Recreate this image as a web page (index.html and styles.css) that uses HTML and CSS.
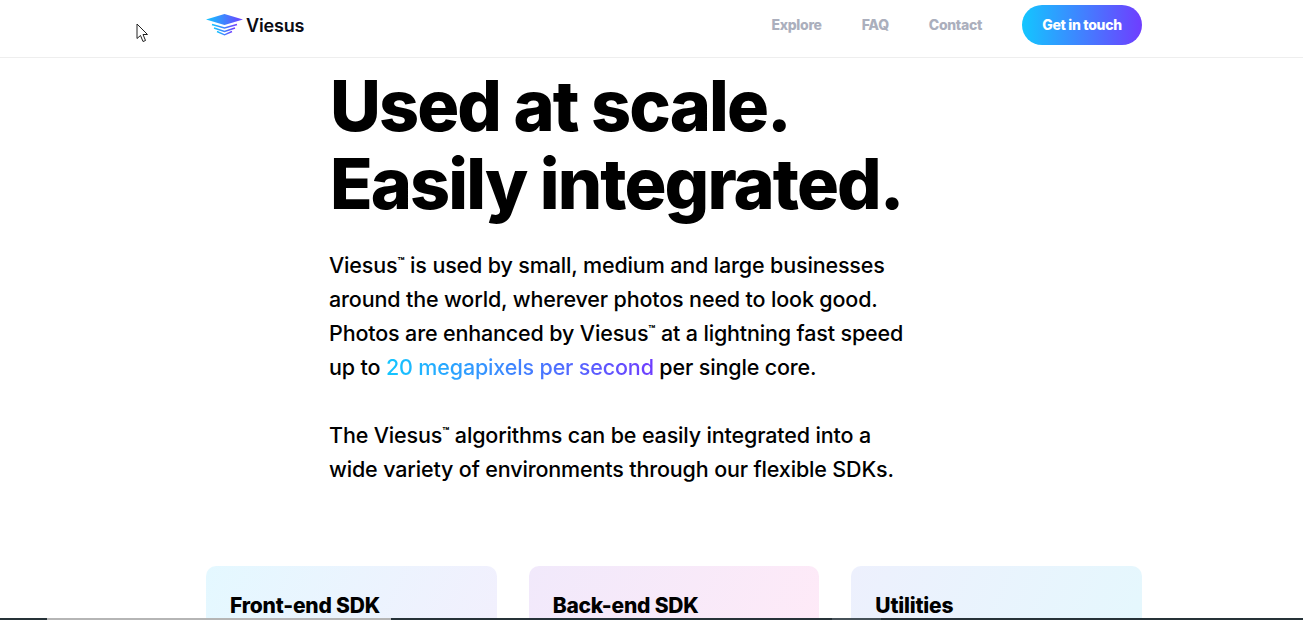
FILE: index.html
```html
<!DOCTYPE html>
<html lang="en">
<head>
  <meta charset="UTF-8" />
  <title>Viesus</title>
  <link rel="stylesheet" href="styles.css">
</head>
<body>

  <header class="topbar">
    <div class="topbar-inner">
      <a class="logo" href="#">
        <svg class="logo-mark" width="37" height="22" viewBox="0 0 37 22">
          <defs>
            <linearGradient id="logoGrad" x1="0" y1="0" x2="1" y2="0">
              <stop offset="0" stop-color="#13c6ff" />
              <stop offset="1" stop-color="#6f3dff" />
            </linearGradient>
          </defs>
          <path d="M18.500 0 L37 5.500 L18.500 11 L0 5.500 Z" fill="url(#logoGrad)" />
          <path d="M6 10.500 L18.500 14 L31 10.500" fill="none" stroke="url(#logoGrad)" stroke-width="1.400" />
          <path d="M8 14 L18.500 17.500 L29 14" fill="none" stroke="url(#logoGrad)" stroke-width="1.400" />
          <path d="M11 17.500 L18.500 20.800 L26 17.500" fill="none" stroke="url(#logoGrad)" stroke-width="1.400" />
        </svg>
        <span>Viesus</span>
      </a>
      <nav class="nav">
        <a href="#">Explore</a>
        <a href="#">FAQ</a>
        <a href="#">Contact</a>
        <a class="btn" href="#">Get in touch</a>
      </nav>
    </div>
  </header>

  <svg class="cursor" width="14" height="20" viewBox="0 0 14 20">
    <path d="M1 1 L1 15.500 L4.500 12.500 L7 18.500 L9.500 17.500 L7 11.500 L11.500 11.500 Z" fill="#fff" stroke="#222" stroke-width="1" />
  </svg>

  <main class="content">
    <section class="intro">
      <h1>Used at scale.<br>Easily integrated.</h1>
      <p>Viesus<sup>™</sup> is used by small, medium and large businesses<br>
        around the world, wherever photos need to look good.<br>
        Photos are enhanced by Viesus<sup>™</sup> at a lightning fast speed<br>
        up to <span class="grad-text">20 megapixels per second</span> per single core.</p>
      <p>The Viesus<sup>™</sup> algorithms can be easily integrated into a<br>
        wide variety of environments through our flexible SDKs.</p>
    </section>

    <section class="cards">
      <div class="card card-front"><h2>Front-end SDK</h2></div>
      <div class="card card-back"><h2>Back-end SDK</h2></div>
      <div class="card card-util"><h2>Utilities</h2></div>
    </section>
  </main>

  <div class="strip">
    <span class="seg-dark seg-a"></span>
    <span class="seg-light seg-b"></span>
    <span class="seg-dark seg-c"></span>
    <span class="seg-mid seg-d"></span>
    <span class="seg-dark seg-e"></span>
  </div>

</body>
</html>
```

FILE: styles.css
```css
html, body {
  height: 620px;
  overflow: hidden;
}

body {
  font-family: 'Inter', 'Noto Sans', sans-serif;
  background-color: #fff;
  color: #000;
  margin: 0;
  padding: 0;
}

a {
  text-decoration: none;
}

.topbar {
  height: 57px;
  border-bottom: 1px solid #eee;
}

.topbar-inner {
  width: 936px;
  height: 40px;
  margin-left: 206px;
  padding-top: 5px;
  display: flex;
  align-items: center;
  justify-content: space-between;
}

.logo {
  display: flex;
  align-items: center;
  gap: 3px;
  color: #0b0b14;
  font-size: 18px;
  font-weight: 600;
  letter-spacing: -0.150px;
}

.nav {
  display: flex;
  align-items: center;
  gap: 40px;
  font-size: 14px;
  line-height: 40px;
  font-weight: 800;
  letter-spacing: -0.300px;
}

.nav a {
  color: #abafbd;
}

.nav .btn {
  width: 120px;
  height: 40px;
  text-align: center;
  border-radius: 20px;
  color: #fff;
  background: linear-gradient(90deg, #13c6ff, #6f3dff);
}

.cursor {
  position: absolute;
  left: 136px;
  top: 23px;
}

.content {
  width: 936px;
  margin-left: 206px;
}

.intro {
  padding: 9px 0 0 124px;
}

h1 {
  margin: 0 0 25px;
  font-size: 70px;
  line-height: 78px;
  font-weight: 800;
  letter-spacing: -1.900px;
}

.intro p {
  margin: 0 0 34px -1px;
  font-size: 21.500px;
  line-height: 34px;
  font-weight: 500;
  letter-spacing: -0.150px;
}

.intro sup {
  font-size: 11px;
  line-height: 0;
  font-weight: 800;
}

.grad-text {
  background: linear-gradient(90deg, #13c6ff, #6f3dff);
  -webkit-background-clip: text;
  background-clip: text;
  color: transparent;
}

.cards {
  display: grid;
  grid-template-columns: repeat(3, 1fr);
  gap: 32px;
  margin-top: 80px;
}

.card {
  height: 120px;
  padding: 25px 24px;
  box-sizing: border-box;
  border-radius: 10px;
}

.card h2 {
  margin: 0;
  font-size: 21px;
  line-height: 30px;
  font-weight: 800;
  letter-spacing: -0.200px;
}

.card-front {
  background: linear-gradient(115deg, #e4f8ff, #f3effd);
}

.card-back {
  background: linear-gradient(115deg, #f1e9fb, #ffeaf7);
}

.card-util {
  background: linear-gradient(115deg, #edf0fd, #e4f8fd);
}

.strip {
  position: fixed;
  left: 0;
  right: 0;
  bottom: 0;
  height: 2px;
  display: flex;
}

.seg-dark {
  background-color: #263238;
}

.seg-light {
  background-color: #b5b5b5;
}

.seg-mid {
  background-color: #465158;
}

.seg-a {
  width: 47px;
}

.seg-b {
  width: 344px;
}

.seg-c {
  width: 441px;
}

.seg-d {
  width: 49px;
}

.seg-e {
  flex: 1;
}
```
